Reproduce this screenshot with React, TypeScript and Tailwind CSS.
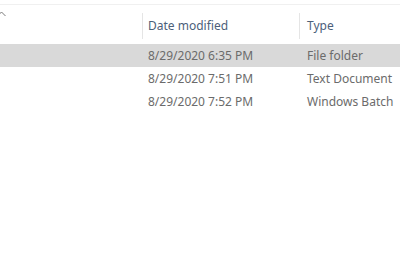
const rows = [
  { date: "8/29/2020 6:35 PM", type: "File folder", selected: true },
  { date: "8/29/2020 7:51 PM", type: "Text Document", selected: false },
  { date: "8/29/2020 7:52 PM", type: "Windows Batch", selected: false },
];

export default function App() {
  return (
    <div className="h-[255px] w-[400px] overflow-hidden bg-white font-['Noto_Sans',sans-serif] text-[12px]">
      {/* top edge */}
      <div className="mt-[4px] h-px w-full bg-[#f0f0f0]" />

      {/* column headers */}
      <div className="relative flex h-[39px] items-center pt-[2px]">
        {/* sort caret, clipped at the left edge */}
        <svg className="absolute -left-[3px] top-[6px]" width="9" height="6" viewBox="0 0 9 6">
          <path d="M0.5 5 L4.5 1 L8.5 5" fill="none" stroke="#7a7a7a" strokeWidth="1" />
        </svg>
        <div className="w-[142px]" />
        <div className="flex h-[26px] w-[157px] items-center border-l border-[#e5e5e5] pl-[5px] text-[#4c607a]">
          Date modified
        </div>
        <div className="flex h-[26px] flex-1 items-center border-l border-[#e5e5e5] pl-[7px] text-[#4c607a]">
          Type
        </div>
      </div>

      {/* rows */}
      <div className="flex flex-col">
        {rows.map((row) => (
          <div
            key={row.date}
            className={`flex h-[23px] items-center pt-[1px] text-[#6b6b6b] ${row.selected ? "bg-[#d9d9d9]" : ""}`}
          >
            <div className="w-[142px]" />
            <div className="w-[157px] pl-[6px]">{row.date}</div>
            <div className="flex-1 whitespace-nowrap pl-[8px]">{row.type}</div>
          </div>
        ))}
      </div>
    </div>
  );
}
